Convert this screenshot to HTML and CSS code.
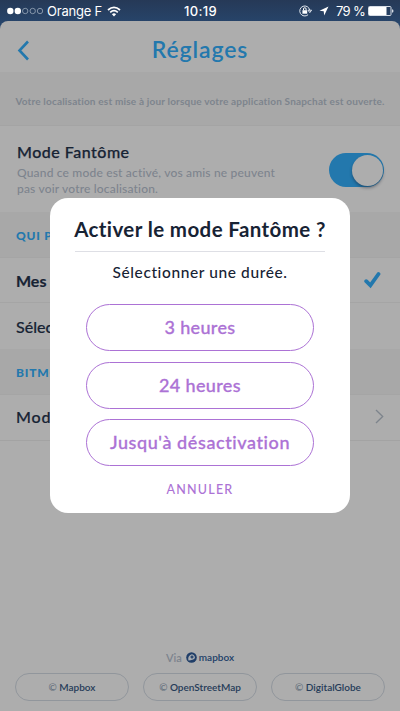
FILE: index.html
```html
<!DOCTYPE html>
<html lang="fr">
<head>
<meta charset="utf-8">
<title>Réglages</title>
<link rel="stylesheet" href="styles.css">
</head>
<body>
<div class="phone">
  <header class="status">
    <div class="carrier">
      <svg width="37" height="8" viewBox="0 0 37 8"><g fill="#fff"><circle cx="3.3" cy="4" r="3.2"/><circle cx="10.8" cy="4" r="3.2"/></g><g fill="none" stroke="#8d9db0" stroke-width=".9"><circle cx="18.2" cy="4" r="2.7"/><circle cx="25.7" cy="4" r="2.7"/><circle cx="33" cy="4" r="2.7"/></g></svg>
      <span class="operator">Orange F</span>
      <svg width="14" height="11" viewBox="0 0 14 11"><g fill="none" stroke="#fff" stroke-width="1.7"><path d="M1 4Q7-1.4 13 4M3.2 6.4Q7 3 10.8 6.4"/></g><path d="M4.9 8.2Q7 6.5 9.1 8.2L7 10.6Z" fill="#fff"/></svg>
    </div>
    <span class="clock">10:19</span>
    <div class="indicators">
      <svg width="13" height="12" viewBox="0 0 13 12"><path d="M10.7 5.2A5 5 0 1 0 9.1 9.7M9 5.2h3.6L10.8 7.6Z" fill="none" stroke="#dfe5ed" stroke-width="1"/><path d="M3.4 5.2h4.8v3.5H3.4Z" fill="#fff"/><path d="M4.5 5V4a1.3 1.3 0 0 1 2.6 0v1" fill="none" stroke="#fff"/></svg>
      <svg width="10" height="10" viewBox="0 0 10 10"><path d="M9.5.5.5 4.8l4.2.5.5 4.2Z" fill="#fff"/></svg>
      <span class="percent">79 %</span>
      <svg width="26" height="10" viewBox="0 0 26 10"><rect x=".5" y=".5" width="22.5" height="9" rx="1" fill="none" stroke="#d6dce5"/><rect x="1" y="1" width="17.5" height="8" fill="#fff"/><path d="M24 3.2q1.5.2 1.5 1.8T24 6.8Z" fill="#d6dce5"/></svg>
    </div>
  </header>
  <main class="sheet">
    <div class="navbar">
      <svg class="back" width="13" height="21" viewBox="0 0 13 21"><path d="M11 1.5 2.5 10.5l8.5 9" fill="none" stroke="#2378ad" stroke-width="2.6"/></svg>
      <h1>Réglages</h1>
    </div>
    <p class="notice"><span>Votre localisation est mise à jour lorsque votre application Snapchat est ouverte.</span></p>
    <section class="ghost">
      <div>
        <h2>Mode Fantôme</h2>
        <p>Quand ce mode est activé, vos amis ne peuvent<br>pas voir votre localisation.</p>
      </div>
      <div class="switch"><div class="knob"></div></div>
    </section>
    <h3 class="group">QUI P</h3>
    <div class="row friends"><span>Mes</span><svg width="17" height="18" viewBox="0 0 17 18"><path d="M2.2 10.2 6.4 14.4 14.5 3" fill="none" stroke="#2378ad" stroke-width="3.8" stroke-linecap="round" stroke-linejoin="miter"/></svg></div>
    <div class="row select"><span>Sélec</span></div>
    <h3 class="group bitmoji">BITMO</h3>
    <div class="row edit"><span>Mod</span><svg width="9" height="15" viewBox="0 0 9 15"><path d="m1 1 6.7 6.5L1 14" fill="none" stroke="#7d848c" stroke-width="1.3"/></svg></div>
    <footer>
      <div class="via"><span>Via</span><svg width="11" height="11" viewBox="0 0 11 11"><circle cx="5.5" cy="5.5" r="5.3" fill="#203e68"/><path d="M2.5 8.5Q1.5 5.3 4 3.2T8.3 3.8 7.2 7.4 2.5 8.5Z" fill="#a9adb2"/><path d="m6 2.8.7 1.5 1.5.7-1.5.7L6 7.2l-.7-1.5L3.8 5l1.5-.7Z" fill="#203e68"/></svg><b>mapbox</b></div>
      <div class="credits"><a><i>©</i> Mapbox</a><a><i>©</i> OpenStreetMap</a><a><i>©</i> DigitalGlobe</a></div>
    </footer>
  </main>
  <div class="dialog">
    <h2>Activer le mode Fantôme ?</h2>
    <p>Sélectionner une durée.</p>
    <button class="hours">3 heures</button>
    <button class="hours">24 heures</button>
    <button class="until">Jusqu'à désactivation</button>
    <a class="cancel">ANNULER</a>
  </div>
</div>
</body>
</html>
```
FILE: styles.css
```css
* { box-sizing: border-box; }
body, h1, h2, h3, p { margin: 0; }
svg { display: block; flex: none; }
.phone { position: relative; display: flex; flex-direction: column; width: 400px; height: 711px; overflow: hidden; background: linear-gradient(#263957, #27476f 28px); font-family: Lato, "Open Sans", sans-serif; color: #172334; white-space: nowrap; }
.status { display: grid; grid-template-columns: 1fr auto 1fr; align-items: center; height: 21px; padding: 1px 6px 0 7px; color: #fff; font: 13px/20px Inter, "Liberation Sans", sans-serif; }
.carrier, .indicators { display: flex; align-items: center; }
.carrier { gap: 3px; }
.operator { letter-spacing: -.2px; margin-right: 2px; }
.clock { font-weight: 500; letter-spacing: .3px; }
.indicators { justify-content: flex-end; gap: 7px; }
.percent { margin-right: -4px; letter-spacing: -.7px; }
.sheet { flex: 1; display: flex; flex-direction: column; overflow: hidden; border-radius: 8px 8px 0 0; background: #adadad; }
.navbar { position: relative; display: flex; justify-content: center; height: 51px; }
.back { position: absolute; left: 17px; top: 19px; }
h1 { color: #2378ad; font-size: 23px; line-height: 56px; font-weight: 600; letter-spacing: .9px; }
.notice { height: 54px; border-bottom: 1px solid #a4a4a4; background: #a8a8a8; color: #7d848d; font-size: 10px; font-weight: 700; line-height: 59px; text-align: center; letter-spacing: .18px; }
.ghost { display: flex; justify-content: space-between; height: 86px; padding: 14px 16px 0 17px; }
.ghost h2 { font-size: 16px; font-weight: 500; line-height: 24px; letter-spacing: .5px; -webkit-text-stroke: .25px; }
.ghost p { margin-top: 1px; color: #7d848d; font-size: 12px; font-weight: 500; line-height: 16px; letter-spacing: .18px; }
.switch { display: flex; justify-content: flex-end; width: 55px; height: 34px; margin-top: 13px; padding: 1.5px; border-radius: 17px; background: #2378ad; }
.knob { width: 31px; height: 31px; border-radius: 50%; background: #adadad; box-shadow: 0 2px 3px #17233470; }
.group { height: 45px; padding-left: 16px; background: #a8a8a8; color: #2378ad; font-size: 12px; font-weight: 900; line-height: 48px; letter-spacing: .8px; }
.row { display: flex; justify-content: space-between; align-items: center; height: 46px; padding: 0 19px 0 16px; font-size: 16px; font-weight: 500; border-top: 1px solid #a5a5a5; -webkit-text-stroke: .2px; }
.friends { height: 45px; font-weight: 700; }
.select { height: 47px; }
.edit { height: 47px; padding: 0 16px 2px; border-bottom: 1px solid #a3a3a3; letter-spacing: .8px; }
footer { margin-top: auto; padding: 0 15px 10px; }
.via { display: flex; justify-content: center; align-items: center; height: 16px; gap: 4px; color: #7d848d; font-size: 11px; font-weight: 600; }
.via b { margin-left: -2px; color: #203e68; font-size: 10px; font-weight: 600; letter-spacing: 0; }
.credits { display: flex; justify-content: space-between; margin-top: 8px; }
.credits a { width: 114px; height: 28px; border: 1px solid #91969c; border-radius: 14px; color: #263c59; font-size: 10px; font-weight: 600; line-height: 26px; text-align: center; }
.credits i { color: #66717e; font-style: normal; }
.dialog { position: absolute; left: 50px; top: 198px; display: flex; flex-direction: column; align-items: center; width: 300px; height: 315px; padding: 0 25px; border-radius: 18px; background: #fff; }
.dialog h2 { display: flex; justify-content: center; width: 100%; height: 54px; border-bottom: 1px solid #dedfe5; font-size: 20.5px; line-height: 62px; font-weight: 700; letter-spacing: .4px; }
.dialog p { height: 52px; font-size: 15.5px; line-height: 40px; font-weight: 500; letter-spacing: .6px; }
button { flex: none; width: 228px; height: 47px; margin-bottom: 10.5px; padding: 0; border: 1.5px solid #ac72d5; border-radius: 24px; background: #fff; color: #ac72d5; font: 500 18px/43px Lato, sans-serif; letter-spacing: .35px; -webkit-text-stroke: .3px; }
.until { letter-spacing: .6px; }
.cancel { color: #ac72d5; font-size: 12.5px; line-height: 25px; font-weight: 500; letter-spacing: 1.2px; }
```
